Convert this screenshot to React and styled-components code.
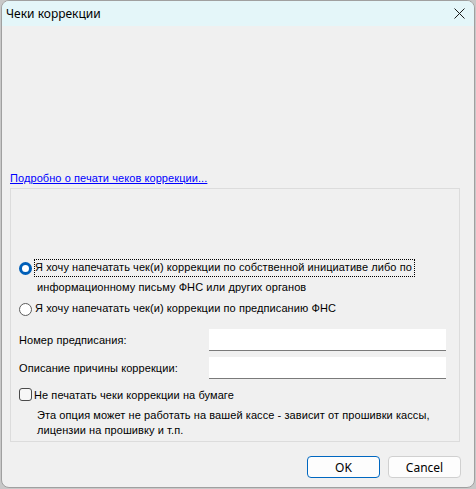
import React from 'react';
import styled, { createGlobalStyle } from 'styled-components';

const GlobalStyle = createGlobalStyle`
    html, body {
        margin: 0;
        padding: 0;
        background: #c8c8c8;
    }
`;

const Window = styled.div`
    box-sizing: border-box;
    width: 474px;
    height: 488px;
    margin-left: 1px;
    background: #f0f0f0;
    border: 1px solid #a0a0a0;
    border-radius: 8px;
    overflow: hidden;
    display: flex;
    flex-direction: column;
    font-family: "Liberation Sans", Arial, sans-serif;
    font-size: 11px;
    letter-spacing: 0.08px;
    color: #000;
`;

const TitleBar = styled.div`
    height: 25px;
    flex: none;
    background: #e4f6f9;
    display: flex;
    align-items: center;
    justify-content: space-between;
    padding: 0 9px 0 4px;
    font-family: "Noto Sans", "Open Sans", sans-serif;
    font-size: 12px;
    letter-spacing: 0;
`;

const CloseButton = styled.div`
    width: 12px;
    height: 12px;
    display: flex;
    align-items: center;
    justify-content: center;
`;

const Body = styled.div`
    flex: 1;
    display: flex;
    flex-direction: column;
    padding: 0 14px 0 8px;
`;

const Link = styled.a`
    margin-top: 146px;
    line-height: 13px;
    color: #0000ff;
    text-decoration: underline;
    cursor: pointer;
`;

const Group = styled.div`
    box-sizing: border-box;
    margin: 3px 0 0 0;
    height: 254px;
    border: 1px solid #dcdcdc;
    padding: 71px 0 0 8px;
    display: flex;
    flex-direction: column;
`;

const OptionRow = styled.div`
    display: flex;
    align-items: flex-start;
    margin-bottom: ${(p) => p.gap || 0}px;
`;

const Radio = styled.span`
    box-sizing: border-box;
    flex: none;
    width: 13px;
    height: 13px;
    margin-top: 2px;
    border-radius: 50%;
    border: ${(p) => (p.checked ? '3.5px solid #005fb8' : '1px solid #5c5c5c')};
    background: #fff;
`;

const OptionText = styled.div`
    margin-left: 3px;
    line-height: 15px;
`;

const Focused = styled.span`
    display: inline-block;
    outline: 1px dotted #000;
    padding: 0 2px 1px 0;
`;

const SecondLine = styled.div`
    margin: 4px 0 0 2px;
`;

const FieldRow = styled.div`
    display: flex;
    align-items: center;
    margin-top: ${(p) => p.top}px;
`;

const FieldLabel = styled.label`
    width: 190px;
`;

const Input = styled.div`
    box-sizing: border-box;
    width: 237px;
    height: 22px;
    background: #fff;
    border-bottom: 1px solid #7a7a7a;
`;

const CheckRow = styled.div`
    display: flex;
    align-items: center;
    margin-top: 9px;
`;

const Checkbox = styled.span`
    box-sizing: border-box;
    width: 13px;
    height: 13px;
    border: 1px solid #4a4a4a;
    border-radius: 3px;
    background: #f7f7f7;
    margin-right: 2px;
`;

const Hint = styled.div`
    margin: 7px 0 0 18px;
    line-height: 15px;
`;

const Footer = styled.div`
    display: flex;
    justify-content: flex-end;
    gap: 8px;
    padding: 14px 13px 0 0;
    margin-right: -14px;
`;

const Button = styled.button`
    box-sizing: border-box;
    width: 73px;
    height: 22px;
    padding: 0;
    background: #fdfdfd;
    border: 1px solid ${(p) => (p.primary ? '#0067c0' : '#d0d0d0')};
    border-radius: 4px;
    font-family: "Noto Sans", "Open Sans", sans-serif;
    font-size: 12px;
    color: #000;
`;

export default function App() {
    return (
        <>
            <GlobalStyle />
            <Window>
                <TitleBar>
                    <span>Чеки коррекции</span>
                    <CloseButton>
                        <svg width="11" height="11" viewBox="0 0 11 11">
                            <path d="M0.5 0.5 L10.5 10.5 M10.5 0.5 L0.5 10.5" stroke="#1a1a1a" strokeWidth="1" />
                        </svg>
                    </CloseButton>
                </TitleBar>
                <Body>
                    <Link>Подробно о печати чеков коррекции...</Link>
                    <Group>
                        <OptionRow gap={6}>
                            <Radio checked />
                            <OptionText>
                                <Focused>Я хочу напечатать чек(и) коррекции по собственной инициативе либо по</Focused>
                                <SecondLine>информационному письму ФНС или других органов</SecondLine>
                            </OptionText>
                        </OptionRow>
                        <OptionRow>
                            <Radio />
                            <OptionText>Я хочу напечатать чек(и) коррекции по предписанию ФНС</OptionText>
                        </OptionRow>
                        <FieldRow top={13}>
                            <FieldLabel>Номер предписания:</FieldLabel>
                            <Input />
                        </FieldRow>
                        <FieldRow top={6}>
                            <FieldLabel>Описание причины коррекции:</FieldLabel>
                            <Input />
                        </FieldRow>
                        <CheckRow>
                            <Checkbox />
                            <span>Не печатать чеки коррекции на бумаге</span>
                        </CheckRow>
                        <Hint>
                            Эта опция может не работать на вашей кассе - зависит от прошивки кассы,
                            <br />
                            лицензии на прошивку и т.п.
                        </Hint>
                    </Group>
                    <Footer>
                        <Button primary>OK</Button>
                        <Button>Cancel</Button>
                    </Footer>
                </Body>
            </Window>
        </>
    );
}
